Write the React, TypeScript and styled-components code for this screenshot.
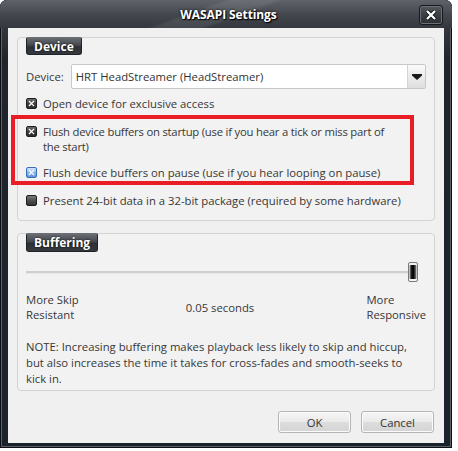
import React from "react";
import styled, { createGlobalStyle } from "styled-components";

const GlobalStyle = createGlobalStyle`
  html, body {
    margin: 0;
    padding: 0;
    background: #ffffff;
  }
  body {
    font-family: "Open Sans", "Noto Sans", "Liberation Sans", sans-serif;
  }
`;

// Window chrome
const Window = styled.div`
  width: 452px;
  height: 448px;
  display: flex;
  flex-direction: column;
  border-radius: 7px 7px 0 0;
  background: linear-gradient(180deg, #4b4f55 0px, #33373d 28px, #20252c 60px, #1a222c 100%);
  box-shadow: inset 0 0 0 1px #0c0f14, inset 0 0 0 2px #5b6068;
  overflow: hidden;
`;

const TitleBar = styled.div`
  height: 28px;
  display: grid;
  grid-template-columns: 1fr auto 1fr;
  align-items: center;
  padding: 0 9px 0 8px;
  background:
    linear-gradient(160deg, transparent 0 42%, rgba(255, 255, 255, 0.08) 44% 52%, transparent 54%),
    linear-gradient(180deg, #5f6369 0%, #43474d 55%, #34383e 100%);
`;

const Title = styled.div`
  grid-column: 2;
  color: #ffffff;
  font-weight: 700;
  font-size: 12px;
  letter-spacing: -0.1px;
  text-shadow: 0 0 3px #000, 1px 1px 1px #000;
  padding-left: 6px;
`;

const CloseButton = styled.div`
  grid-column: 3;
  justify-self: end;
  width: 24px;
  height: 20px;
  margin-top: 1px;
  border-radius: 3px;
  border: 1px solid #15181c;
  box-shadow: inset 0 0 0 1px #6b6f75;
  background: linear-gradient(180deg, #55595f 0%, #3b3f45 50%, #2c3036 100%);
  display: flex;
  align-items: center;
  justify-content: center;
  box-sizing: border-box;
`;

const Client = styled.div`
  flex: 1;
  margin: 0 8px 5px 8px;
  background: #f0f0f0;
  padding: 9px 9px 10px 9px;
  display: flex;
  flex-direction: column;
  position: relative;
  color: #373737;
  font-size: 11.3px;
`;

// Group boxes
const Group = styled.div<{ $height: number }>`
  height: ${(p) => p.$height}px;
  box-sizing: border-box;
  border: 1px solid #d3d3d3;
  border-radius: 4px;
  background: #f2f2f2;
  padding: 0 8px;
  display: flex;
  flex-direction: column;
  & + & {
    margin-top: 12px;
  }
`;

const GroupTab = styled.div<{ $height: number }>`
  align-self: flex-start;
  margin-top: -1px;
  height: ${(p) => p.$height}px;
  padding: 0 7px 0 7px;
  display: flex;
  align-items: center;
  border-radius: 2px 2px 3px 3px;
  border: 1px solid #1f2226;
  border-top-color: #6c7076;
  background: linear-gradient(180deg, #696d72 0%, #45494f 45%, #2d3035 55%, #36393e 100%);
  color: #ffffff;
  font-weight: 700;
  font-size: 12px;
  text-shadow: 0 0 2px #000;
  box-sizing: border-box;
`;

// Device row
const DeviceRow = styled.div`
  margin-top: 9px;
  display: flex;
  align-items: center;
  gap: 7px;
  height: 25px;
`;

const Combo = styled.div`
  flex: 1;
  height: 25px;
  box-sizing: border-box;
  border: 1px solid #c8c8c8;
  border-radius: 2px;
  background: #ffffff;
  display: flex;
  align-items: center;
  padding-left: 4px;
  color: #333;
`;

const ComboText = styled.span`
  flex: 1;
`;

const ComboButton = styled.div`
  width: 17px;
  height: 23px;
  border-left: 1px solid #d4d4d4;
  background: linear-gradient(180deg, #fbfbfb 0%, #ebebeb 50%, #dedede 100%);
  display: flex;
  align-items: center;
  justify-content: center;
`;

// Checkbox rows
const CheckRow = styled.div<{ $top: number }>`
  margin-top: ${(p) => p.$top}px;
  display: flex;
  align-items: flex-start;
  gap: 6px;
  line-height: 15px;
`;

const Box = styled.div<{ $variant: "dark" | "blue" | "off" }>`
  flex: none;
  width: 11px;
  height: 11px;
  margin-top: 2px;
  border-radius: 2px;
  box-sizing: border-box;
  display: flex;
  align-items: center;
  justify-content: center;
  border: 1px solid ${(p) => (p.$variant === "blue" ? "#3a6fb5" : "#1e1e1e")};
  background: ${(p) =>
    p.$variant === "blue"
      ? "linear-gradient(180deg, #cfe4fb 0%, #8ab8ee 50%, #5b93dc 100%)"
      : p.$variant === "dark"
      ? "linear-gradient(180deg, #6a6a6a 0%, #3a3a3a 60%, #2c2c2c 100%)"
      : "linear-gradient(180deg, #7a7a7a 0%, #4a4a4a 55%, #353535 100%)"};
`;

const CheckText = styled.span<{ $width?: number; $tight?: boolean }>`
  ${(p) => (p.$width ? `width: ${p.$width}px;` : "")}
  ${(p) => (p.$tight ? "letter-spacing: -0.22px;" : "")}
`;

// Red annotation frame
const Highlight = styled.div`
  position: absolute;
  left: 3px;
  top: 87px;
  width: 403px;
  height: 70px;
  box-sizing: border-box;
  border: 4px solid #e81d25;
  pointer-events: none;
`;

// Slider
const SliderRow = styled.div`
  margin-top: 10px;
  height: 20px;
  display: flex;
  align-items: center;
  padding-right: 8px;
`;

const Track = styled.div`
  flex: 1;
  height: 2px;
  background: #cfcfcf;
  border-bottom: 1px solid #e6e6e6;
`;

const Thumb = styled.div`
  width: 10px;
  height: 20px;
  box-sizing: border-box;
  border: 1px solid #7b7b7b;
  border-radius: 2px;
  background: linear-gradient(90deg, #f5f5f5 0%, #222 25%, #000 55%, #555 80%, #eee 100%);
  box-shadow: inset 0 2px 0 #f2f2f2, inset 0 -2px 0 #f2f2f2;
`;

const ScaleRow = styled.div`
  margin-top: 10px;
  display: grid;
  grid-template-columns: 1fr auto 1fr;
  align-items: center;
  line-height: 15px;
`;

const ScaleLabel = styled.div<{ $align: "left" | "right" }>`
  text-align: left;
  justify-self: ${(p) => (p.$align === "left" ? "start" : "end")};
`;

const ScaleValue = styled.div`
  padding-right: 12px;
`;

const Note = styled.p`
  margin: 17px 0 0 0;
  line-height: 16px;
  width: 390px;
`;

// Buttons
const ButtonBar = styled.div`
  margin-top: auto;
  display: flex;
  justify-content: flex-end;
  gap: 10px;
  padding-right: 1px;
`;

const Button = styled.div`
  width: 73px;
  height: 22px;
  box-sizing: border-box;
  border: 1px solid #b5b5b5;
  border-radius: 3px;
  background: linear-gradient(180deg, #f6f6f6 0%, #eaeaea 48%, #dddddd 52%, #d4d4d4 100%);
  box-shadow: inset 0 0 0 1px #fbfbfb;
  display: flex;
  align-items: center;
  justify-content: center;
  color: #333;
`;

const CrossIcon: React.FC<{ size: number; weight: number }> = ({ size, weight }) => (
  <svg width={size} height={size} viewBox="0 0 10 10">
    <path
      d="M2 2 L8 8 M8 2 L2 8"
      stroke="#ffffff"
      strokeWidth={weight}
      strokeLinecap="square"
    />
  </svg>
);

const ChevronDown = () => (
  <svg width="10" height="6" viewBox="0 0 10 6">
    <path d="M0 0 L10 0 L10 1.5 L5 6 L0 1.5 Z" fill="#1a1a1a" />
  </svg>
);

export default function App() {
  return (
    <>
      <GlobalStyle />
      <Window>
        <TitleBar>
          <Title>WASAPI Settings</Title>
          <CloseButton>
            <svg width="12" height="10" viewBox="0 0 12 10">
              <path d="M2 1 L10 9 M10 1 L2 9" stroke="#000" strokeWidth="3.8" />
              <path d="M2 1 L10 9 M10 1 L2 9" stroke="#fff" strokeWidth="2.4" />
            </svg>
          </CloseButton>
        </TitleBar>
        <Client>
          <Group $height={184}>
            <GroupTab $height={18}>Device</GroupTab>
            <DeviceRow>
              <span>Device:</span>
              <Combo>
                <ComboText>HRT HeadStreamer (HeadStreamer)</ComboText>
                <ComboButton>
                  <ChevronDown />
                </ComboButton>
              </Combo>
            </DeviceRow>
            <CheckRow $top={7}>
              <Box $variant="dark">
                <CrossIcon size={7} weight={1.8} />
              </Box>
              <CheckText>Open device for exclusive access</CheckText>
            </CheckRow>
            <CheckRow $top={13}>
              <Box $variant="dark">
                <CrossIcon size={7} weight={1.8} />
              </Box>
              <CheckText $width={352} $tight>
                Flush device buffers on startup (use if you hear a tick or miss part of the start)
              </CheckText>
            </CheckRow>
            <CheckRow $top={11}>
              <Box $variant="blue">
                <CrossIcon size={7} weight={1.8} />
              </Box>
              <CheckText>Flush device buffers on pause (use if you hear looping on pause)</CheckText>
            </CheckRow>
            <CheckRow $top={13}>
              <Box $variant="off" />
              <CheckText>Present 24-bit data in a 32-bit package (required by some hardware)</CheckText>
            </CheckRow>
          </Group>
          <Group $height={158}>
            <GroupTab $height={19}>Buffering</GroupTab>
            <SliderRow>
              <Track />
              <Thumb />
            </SliderRow>
            <ScaleRow>
              <ScaleLabel $align="left">
                More Skip
                <br />
                Resistant
              </ScaleLabel>
              <ScaleValue>0.05 seconds</ScaleValue>
              <ScaleLabel $align="right">
                More
                <br />
                Responsive
              </ScaleLabel>
            </ScaleRow>
            <Note>
              NOTE: Increasing buffering makes playback less likely to skip and hiccup, but also
              increases the time it takes for cross-fades and smooth-seeks to kick in.
            </Note>
          </Group>
          <ButtonBar>
            <Button>OK</Button>
            <Button>Cancel</Button>
          </ButtonBar>
          <Highlight />
        </Client>
      </Window>
    </>
  );
}
